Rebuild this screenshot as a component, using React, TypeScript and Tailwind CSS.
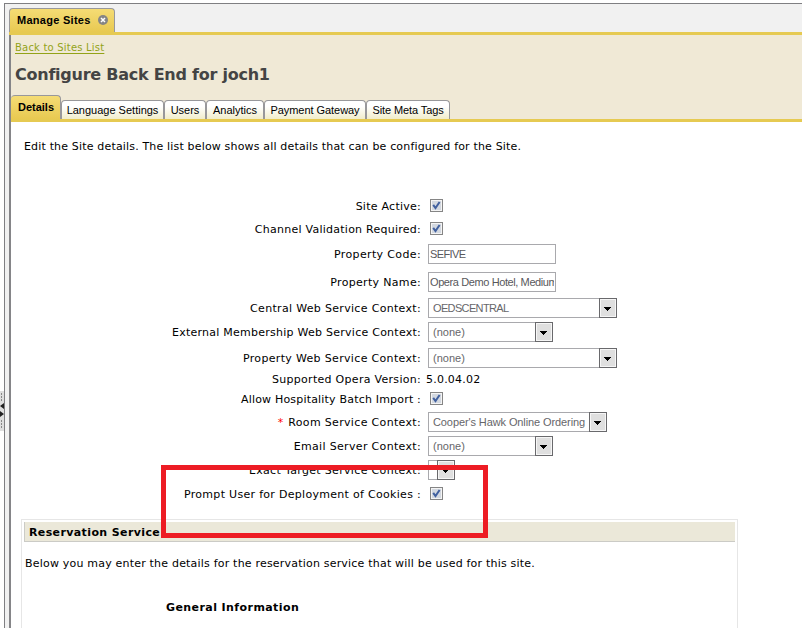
import React from 'react';

function Check() {
  return (
    <span className="mb-px ml-[9px] flex h-[13px] w-[13px] shrink-0 border border-[#858585] bg-[#d3d8e0] p-px shadow-[inset_0_0_0_1px_#f4f4f4]">
      <svg width="9" height="9" viewBox="0 0 9 9">
        <path d="M1.2 3.8 3.5 7 7.6 1" fill="none" stroke="#41609f" strokeWidth="2" />
      </svg>
    </span>
  );
}

function Input({ value, spacing }: { value: string; spacing: string }) {
  return (
    <span className={`ml-[7px] flex h-5 w-32 shrink-0 items-center overflow-hidden border border-[#a9a9ad] bg-white pl-px pr-px text-[11px] text-[#58585c] ${sans}`}>
      <span className={`block w-full overflow-hidden whitespace-nowrap leading-[18px] ${spacing}`}>{value}</span>
    </span>
  );
}

function Select({ value, width, spacing = '' }: { value: string; width: string; spacing?: string }) {
  return (
    <span className={`ml-[7px] flex h-5 shrink-0 items-center border border-[#a9a9ad] bg-white text-[11px] text-[#66666a] ${sans} ${width}`}>
      <span className={`min-w-0 flex-1 overflow-hidden whitespace-nowrap pl-1 leading-[18px] ${spacing}`}>{value}</span>
      <span className="-my-px -mr-px flex h-5 w-[18px] shrink-0 items-center border border-[#69696c] bg-[#dfdfdf] pl-1 shadow-[inset_0_0_0_1px_#f6f6f6]">
        <svg width="7" height="4" viewBox="0 0 7 4" className="mt-px shrink-0" shapeRendering="crispEdges">
          <path d="M0 0H7V1H6V2H5V3H4V4H3V3H2V2H1V1H0Z" fill="#000" />
        </svg>
      </span>
    </span>
  );
}

const sans = "font-['Liberation_Sans',Arial,sans-serif]";

const rows: { label: string; h: string; ls: string; required?: boolean; control: React.ReactNode }[] = [
  { label: 'Site Active:', h: 'h-6', ls: 'tracking-[0.25px]', control: <Check /> },
  { label: 'Channel Validation Required:', h: 'h-[22px]', ls: 'tracking-[0.25px]', control: <Check /> },
  { label: 'Property Code:', h: 'h-7', ls: 'tracking-[0.36px]', control: <Input value="SEFIVE" spacing="tracking-[-0.6px]" /> },
  { label: 'Property Name:', h: 'h-7', ls: 'tracking-[0.32px]', control: <Input value="Opera Demo Hotel, Medium" spacing="tracking-[-0.4px]" /> },
  { label: 'Central Web Service Context:', h: 'h-6', ls: 'tracking-[0.32px]', control: <Select value="OEDSCENTRAL" width="w-[189px]" spacing="tracking-[-0.64px]" /> },
  { label: 'External Membership Web Service Context:', h: 'h-6', ls: 'tracking-[0.25px]', control: <Select value="(none)" width="w-[125px]" /> },
  { label: 'Property Web Service Context:', h: 'h-7', ls: 'tracking-[0.33px]', control: <Select value="(none)" width="w-[189px]" /> },
  { label: 'Supported Opera Version:', h: 'h-[14px]', ls: 'tracking-[0.29px]', control: <span className="ml-[5px] pt-[2px] tracking-[0.22px]">5.0.04.02</span> },
  { label: 'Allow Hospitality Batch Import :', h: 'h-[26px]', ls: 'tracking-[0.19px]', control: <Check /> },
  { label: 'Room Service Context:', h: 'h-5', ls: 'tracking-[0.33px]', required: true, control: <Select value="Cooper's Hawk Online Ordering" width="w-[179px]" spacing="tracking-[-0.1px]" /> },
  { label: 'Email Server Context:', h: 'h-7', ls: 'tracking-[0.33px]', control: <Select value="(none)" width="w-[125px]" /> },
  { label: 'Exact Target Service Context:', h: 'h-5', ls: 'tracking-[0.33px]', control: <Select value="" width="w-[27px]" /> },
  { label: 'Prompt User for Deployment of Cookies :', h: 'h-7', ls: 'tracking-[0.3px]', control: <Check /> },
];

const tabs = [
  { label: 'Language Settings', w: 'w-[103px]', ls: '' },
  { label: 'Users', w: 'w-[42px]', ls: '' },
  { label: 'Analytics', w: 'w-[58px]', ls: '' },
  { label: 'Payment Gateway', w: 'w-[102px]', ls: '-tracking-[0.05px]' },
  { label: 'Site Meta Tags', w: 'w-[84px]', ls: 'tracking-[-0.1px]' },
];

export default function App() {
  return (
    <div className="relative flex h-[628px] w-[802px] overflow-hidden bg-white pt-[3px] font-['DejaVu_Sans',Verdana,sans-serif] text-[11px] leading-[14px] text-black">
      <div className="flex w-1 shrink-0 flex-col pt-[388px]">
        <svg width="4" height="40" viewBox="0 0 4 40">
          <rect width="4" height="40" fill="#dedede" />
          <path d="M1.5 2V11M1.5 29V38" stroke="#888" strokeDasharray="2 1" />
          <path d="M4 12V18L0 15ZM0 20V26L4 23Z" fill="#222" />
        </svg>
      </div>
      <div className="flex min-w-0 flex-1 flex-col border-l border-t border-[#7f7f82] bg-[#f1f1f1]">
        <div className="flex h-7 shrink-0 items-end pl-1">
          <div className={`flex h-6 w-[106px] items-center rounded-t-[4px] border border-b-0 border-[#98989b] bg-linear-to-b from-[#f5dc74] to-[#e8c951] pb-px pl-[7px] font-bold ${sans}`}>
            <span className="whitespace-nowrap pb-px tracking-[0.28px]">Manage Sites</span>
            <svg width="10" height="10" viewBox="0 0 10 10" className="ml-[7px] shrink-0">
              <circle cx="5" cy="5" r="5" fill="#858585" />
              <path d="M3 3 7 7M7 3 3 7" stroke="#fff" strokeWidth="1.5" />
            </svg>
          </div>
        </div>
        <div className="ml-1 h-[3px] shrink-0 bg-[#e6ca52]" />
        <div className="ml-1 flex min-h-0 flex-1 flex-col border-l-2 border-[#858588] bg-white">
          <div className="flex h-[84px] shrink-0 flex-col bg-[#f0e9d6]">
            <a className="ml-1 mt-[6px] self-start whitespace-nowrap text-[10px] tracking-[0.2px] text-[#93a318] underline underline-offset-2">Back to Sites List</a>
            <h1 className="ml-1 mt-[10px] self-start whitespace-nowrap text-[16px] font-bold leading-5 tracking-[-0.25px] text-[#444]">Configure Back End for joch1</h1>
            <div className={`mt-auto flex items-end ${sans}`}>
              <div className="flex h-6 w-[50px] items-center justify-center rounded-t-[4px] border border-b-0 border-l-0 border-[#98989b] bg-linear-to-b from-[#f5dc74] to-[#e8c951] pb-[2px] pl-px font-bold">Details</div>
              {tabs.map((t) => (
                <div key={t.label} className={`flex h-[19px] items-center justify-center whitespace-nowrap rounded-t-[4px] border border-b-0 border-[#98989b] bg-linear-to-b from-white from-30% to-[#f1edcb] pb-px ${t.w} ${t.ls}`}>
                  {t.label}
                </div>
              ))}
            </div>
          </div>
          <div className="h-[3px] shrink-0 bg-[#e6ca52]" />
          <p className="ml-[13px] mt-[18px] shrink-0 self-start whitespace-nowrap tracking-[0.168px]">Edit the Site details. The list below shows all details that can be configured for the Site.</p>
          <div className="mt-10 flex shrink-0 flex-col">
            {rows.map((r) => (
              <div key={r.label} className={`flex shrink-0 items-center ${r.h}`}>
                <div className="flex w-[410px] shrink-0 justify-end whitespace-nowrap pt-[2px]">
                  {r.required && <span className="mr-[5px] text-[#f00]">*</span>}
                  <span className={r.ls}>{r.label}</span>
                </div>
                {r.control}
              </div>
            ))}
          </div>
          <section className="ml-[10px] mt-[11px] flex h-[120px] w-[717px] shrink-0 flex-col border border-b-0 border-[#e6e6e6] px-[2px] pt-[2px]">
            <h2 className="flex h-5 shrink-0 items-center whitespace-nowrap border-b border-l border-[#cbcbc6] bg-[#ebe8d9] pl-1 pt-[2px] font-bold tracking-[0.38px]">Reservation Service</h2>
            <p className="ml-px mt-[15px] self-start whitespace-nowrap tracking-[0.2px]">Below you may enter the details for the reservation service that will be used for this site.</p>
            <h3 className="ml-[142px] mt-[30px] self-start whitespace-nowrap font-bold tracking-[0.42px]">General Information</h3>
          </section>
        </div>
      </div>
      <div className="absolute left-[161px] top-[465px] h-[73px] w-[327px] border-[5px] border-[#ed1c24]" />
    </div>
  );
}
